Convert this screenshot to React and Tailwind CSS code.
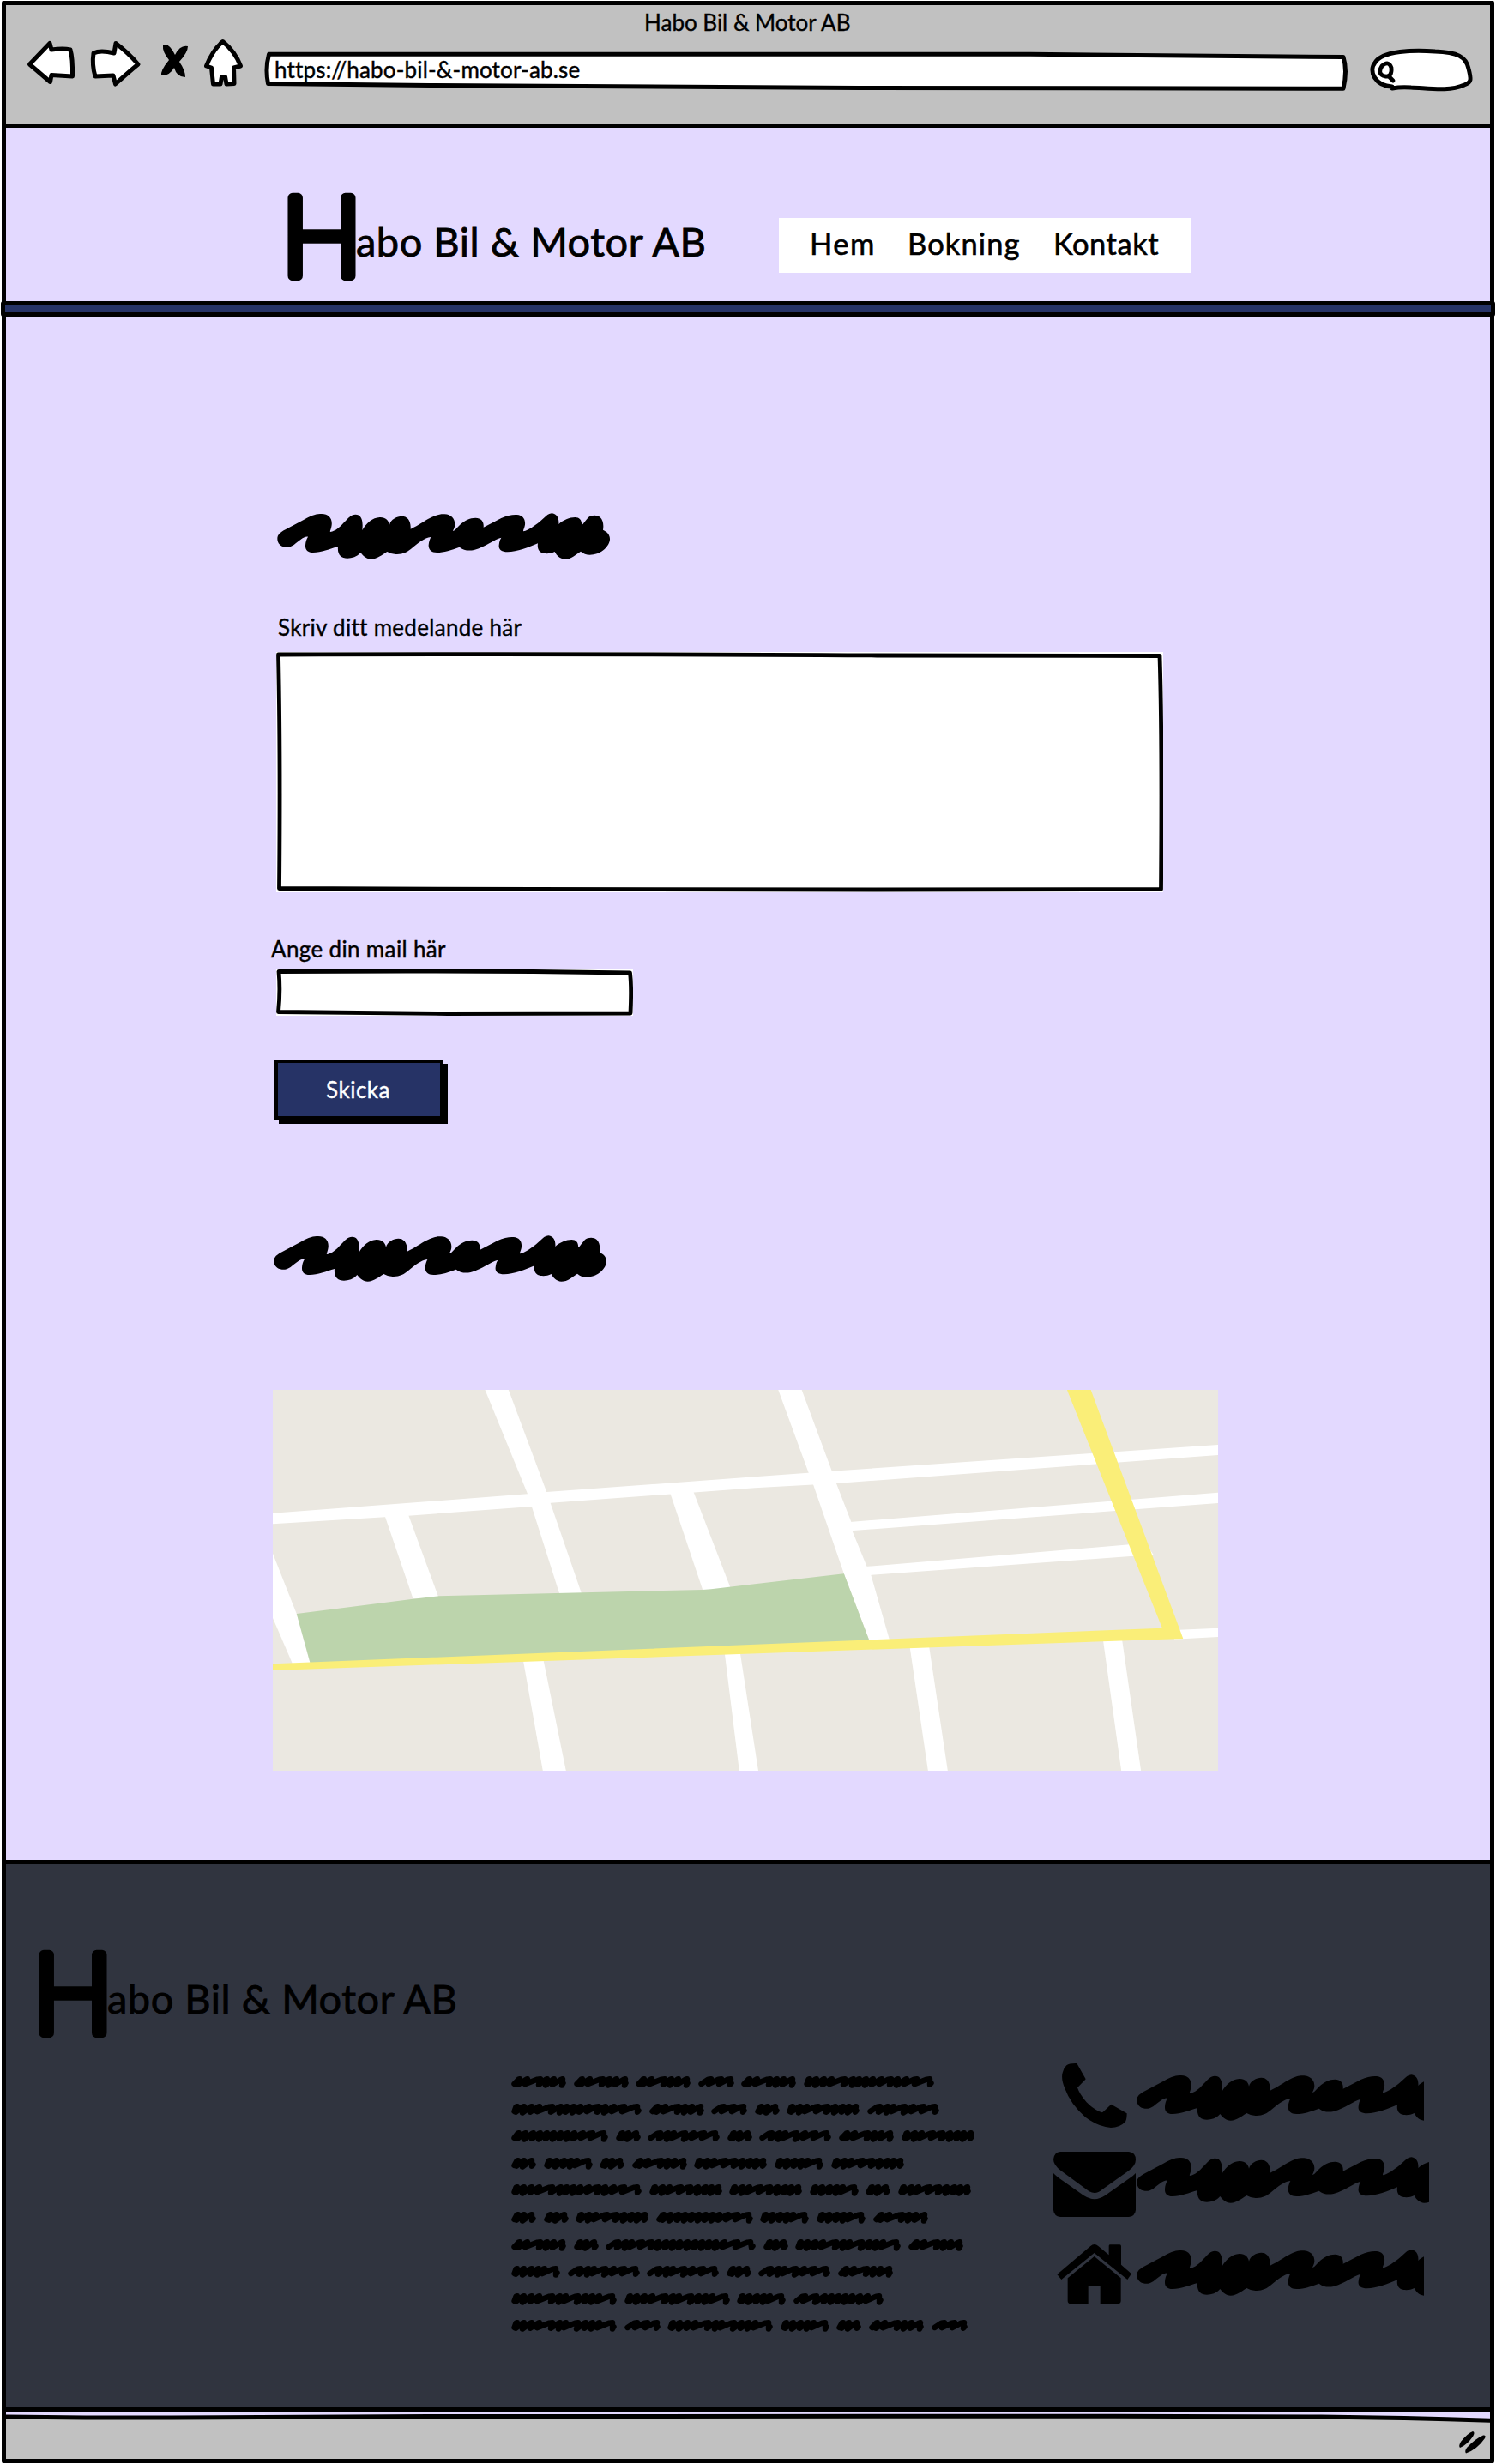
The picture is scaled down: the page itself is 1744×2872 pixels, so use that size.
const FONT = "font-['Lato','Open_Sans',sans-serif] [font-variant-ligatures:none]";

const SCRIBBLE =
  "M57 1410C57 1395 68 1387 85 1378L150 1343C180 1326 195 1323 212 1323C238 1323 252 1342 246 1368C244 1378 240 1384 242 1386C262 1382 275 1370 290 1353C305 1337 315 1325 330 1325C350 1325 358 1343 354 1380C368 1356 390 1336 415 1335C435 1334 446 1345 449 1361C454 1342 475 1331 492 1331C512 1331 525 1347 523 1376C550 1364 570 1348 590 1338C612 1327 625 1323 642 1324C668 1325 682 1345 677 1368C675 1376 670 1382 672 1383C680 1380 685 1372 695 1362C710 1347 730 1337 750 1337C770 1337 780 1350 778 1370L840 1338C860 1328 880 1325 895 1326C917 1327 927 1345 922 1366C920 1376 915 1382 918 1384C935 1380 955 1366 975 1350L995 1332C1005 1323 1012 1321 1018 1321C1035 1323 1043 1340 1041 1359C1055 1345 1080 1335 1098 1335C1115 1335 1123 1347 1121 1363C1128 1358 1135 1345 1145 1335C1155 1327 1175 1325 1186 1335C1196 1345 1199 1360 1196 1379C1212 1386 1221 1397 1220 1413C1217 1440 1185 1466 1150 1466C1138 1466 1127 1462 1118 1454C1100 1466 1085 1481 1062 1481C1045 1480 1035 1470 1027 1455C1015 1462 1000 1462 990 1461C972 1458 965 1445 968 1426C935 1440 895 1456 862 1456C840 1456 830 1447 832 1432C833 1420 836 1412 840 1406C815 1412 785 1438 745 1449C725 1453 708 1450 694 1439C665 1450 640 1458 615 1458C595 1458 585 1446 586 1432C587 1420 590 1412 594 1404C570 1407 550 1425 530 1441C512 1457 495 1465 472 1464C458 1463 450 1460 441 1455C425 1465 405 1481 385 1481C368 1481 358 1470 348 1458C335 1473 318 1478 302 1478C280 1478 266 1465 269 1437C240 1445 210 1458 182 1458C162 1458 154 1447 155 1432C156 1420 159 1410 164 1403C150 1400 130 1420 115 1431C103 1439 93 1440 85 1439C68 1438 57 1425 57 1410Z";

function Scribble({ className = "" }) {
  return (
    <div className={`h-[54px] overflow-hidden ${className}`}>
      <svg width="389" height="54" viewBox="56 1320 1167 162" className="block max-w-none">
        <path d={SCRIBBLE} />
      </svg>
    </div>
  );
}

// Each scribbled word: total width and the x positions of its peaks.
const WORDS = {
  A: [64, [10, 19, 34, 42, 50, 60]],
  B: [42, [15, 27, 38]],
  C: [152, [7, 15, 24, 33, 48, 58, 65, 73, 81, 91, 102, 110, 120, 132, 147]],
  D: [29, [8, 15, 24]],
  E: [85, [7, 16, 24, 37, 48, 57, 66, 73, 81]],
  F: [84, [15, 24, 31, 44, 54, 66, 79]],
  G: [113, [9, 17, 26, 34, 42, 50, 58, 66, 74, 84, 95, 108]],
  H: [57, [7, 15, 24, 32, 39, 52]],
  I: [175, [15, 24, 31, 43, 54, 62, 71, 79, 87, 96, 105, 113, 121, 129, 139, 154, 169]],
  J: [123, [7, 15, 24, 33, 48, 57, 64, 78, 87, 95, 103, 118]],
  K: [105, [14, 27, 37, 45, 53, 61, 69, 78, 87, 100]],
};

const LINES = ["AAABAC", "CABDEF", "GDFDFAE", "DHDAEHE", "CEEHDE", "DDEGHHA", "ADIDJA", "HFFDFA", "JJHK", "JBJHDAB"];

function Word({ kind }) {
  const [width, peaks] = WORDS[kind];
  let d = "M3.5 10";
  peaks.forEach((p, i) => {
    const prev = peaks[i - 1] ?? 0;
    const next = peaks[i + 1] ?? width + 3;
    const wide = next - p > 10;
    const bottom = wide ? 10.2 : i % 2 ? 11.6 : 10.8;
    const dip = i === peaks.length - 1 ? width - 5 : p - (wide ? 3 : 2);
    d += `L${p - (p - prev > 10 ? 3.5 : 1.5)} 4.6L${p} 4.2L${dip} ${bottom}`;
  });
  d += `L${width - 3.5} 9`;
  return (
    <svg width={width} height="16" viewBox={`0 0 ${width} 16`} className="block">
      <path d={d} fill="none" stroke="#000" strokeWidth="6.4" strokeLinejoin="round" strokeLinecap="round" />
    </svg>
  );
}

function Logo() {
  return (
    <div className="flex h-[104px] w-[500px] items-start whitespace-nowrap">
      <svg width="82" height="104" viewBox="0 0 82 104" className="block shrink-0 overflow-visible">
        <text
          x="40"
          y="97.5"
          textAnchor="middle"
          textLength="94"
          lengthAdjust="spacingAndGlyphs"
          className="text-[129px] font-light"
          stroke="#000"
          strokeWidth="11.5"
          strokeLinejoin="round"
        >
          H
        </text>
      </svg>
      <span className="-ml-[2px] mt-[34px] text-[47px] leading-none tracking-[0.5px] [-webkit-text-stroke:0.8px_#000]">abo Bil &amp; Motor AB</span>
    </div>
  );
}

function Toolbar() {
  const line = { fill: "#fff", stroke: "#000", strokeWidth: 5, strokeLinejoin: "round", strokeLinecap: "round" };
  return (
    <div className="h-[143px] border-b-[5px] border-black bg-[#c1c1c1] pt-[7px]">
      <div className="ml-[744px] h-[36px] whitespace-nowrap text-[26px] leading-none [-webkit-text-stroke:0.4px_#000]">Habo Bil &amp; Motor AB</div>
      <div className="-mt-[6px] flex h-[66px] items-start">
        <svg className="ml-[23px] block shrink-0" width="268" height="66" viewBox="30 43 268 66">
          <g {...line}>
            <path d="M34.5 75L58 50.5L60 58Q74 56 82 58Q85 68 84.5 89L60 87.5L58.5 95.5Z" />
            <path d="M109 62Q117 58 133 62L135 50.5Q150 62 161 75Q150 84 134.500 98L132 88L111 89Q107 76 109 62Z" />
            <path d="M259.700 48.500Q248 58 240.500 77L246.500 79L248.500 98H257L258.500 89.500H262.500L264 98L273 97.500L272.500 79L280.500 77Q274 60 259.700 48.500Z" />
          </g>
          <path d="M190 53Q197 49 204 64Q210 52 219 54Q219 61 209 72Q216 82 216 90Q206 90 203 79Q197 89 188 88Q187 82 197 70Q189 60 190 53Z" />
        </svg>
        <div className="relative ml-[10px] h-[45px] w-[1262px] shrink-0 pt-[25px]">
          <svg className="absolute left-0 top-[16px]" width="1264" height="48" viewBox="307 59 1264 48">
            <path {...line} d="M312.500 63.300H1200L1565 66.500Q1570 82 1565 103.200L1000 102.500L500 99.500L311.500 97.500Q308 80 312.500 63.300Z" />
          </svg>
          <span className="relative ml-[12px] block whitespace-nowrap text-[26px] leading-none tracking-[0.17px] [-webkit-text-stroke:0.4px_#000]">
            https://habo-bil-&amp;-motor-ab.se
          </span>
        </div>
        <svg className="ml-[26px] mt-[12px] block shrink-0" width="124" height="54" viewBox="1597 55 124 54">
          <path {...line} d="M1624 101C1604 100 1596 83 1604 73C1612 59 1650 58 1674 60C1700 61 1710 66 1713 80C1716 92 1717 96 1708 99C1690 107 1668 103 1646 102Q1634 101 1624 103Z" />
          <path d="M1612 77Q1620 70 1623 79Q1624 90 1616 89Q1606 87 1612 77M1620 89L1625 94" fill="none" stroke="#000" strokeWidth="4.800" strokeLinecap="round" />
        </svg>
      </div>
    </div>
  );
}

function StreetMap() {
  return (
    <svg className="ml-[311px] mt-[126px] block" width="1102" height="444" viewBox="49 60 2979 1332" preserveAspectRatio="none">
      <rect x="49" y="60" width="2979" height="1332" fill="#ebe8e1" />
      <g fill="#fff">
        <path d="M718 60H792L912 417L1023 775H953L865 468L852 424Z" />
        <path d="M49 491L852 424L912 417L1568 364L1811 344L3028 252V288L1825 387L1568 403L925 455L865 468L476 500L402 505L49 529Z" />
        <path d="M402 500L476 496L573 790H491Z" />
        <path d="M1301 420L1374 414L1494 760H1404Z" />
        <path d="M49 632L124 843L168 1020L112 1020L49 858Z" />
        <path d="M1642 60H1716L1811 344L1825 387L1872 522L1875 553L1921 677L1934 707L1994 940H1930L1849 703L1751 387L1737 348Z" />
        <path d="M1868 522L3028 419V456L1870 553Z" />
        <path d="M1916 678L2749 601L2800 598L2824 636L2761 641L1930 708Z" />
        <path d="M2890 900L3028 893V924L2890 932Z" />
        <path d="M838 1005H902L973 1392H900Z" />
        <path d="M1473 980H1522L1579 1392H1519Z" />
        <path d="M2056 955H2117L2176 1392H2114Z" />
        <path d="M2665 930H2725L2785 1392H2723Z" />
      </g>
      <path d="M124 843L491 791L573 781L1404 759L1430 757L1568 739L1849 703L1930 940L168 1020Z" fill="#bcd4ac" />
      <path d="M49 1018L2852 893L2552 60H2627L2918 930L49 1041Z" fill="#faee78" />
    </svg>
  );
}

function ContactRow({ className, icon, scribble }) {
  return (
    <div className={`flex items-start ${className}`}>
      <div className="h-full w-[97px] shrink-0">{icon}</div>
      {scribble}
    </div>
  );
}

const phoneIcon = (
  <svg width="97" height="78" viewBox="84 74 291 234">
    <path d="M130 84Q140 76 166 77L197 132Q190 140 168 162Q175 184 200 213Q227 240 255 249Q262 243 286 220L341 252Q341 272 336 281Q316 302 285 302Q240 298 196 265Q145 222 124 165Q110 130 116 110Q120 93 130 84Z" />
  </svg>
);
const mailIcon = (
  <svg width="97" height="76" viewBox="84 384 291 228">
    <path d="M108 384H348Q372 387 372 412Q372 432 348 450L255 516Q228 540 200 516L110 450Q84 430 84 410Q87 386 108 384Z" />
    <path d="M84 459Q92 468 110 481L190 537Q228 562 265 537L350 477Q365 467 372 459V588Q370 609 348 612H108Q86 609 84 588Z" />
  </svg>
);
const homeIcon = (
  <svg width="97" height="70" viewBox="84 708 291 210">
    <path d="M97 813L213 715Q227 702 241 714L278 745V713Q278 709 283 709H316Q321 709 321 714V779L357 811L343 831L227 738L112 831Z" />
    <path d="M227 750L320 826V905Q320 915 310 915H248V853H206V915H144Q134 915 134 905V826Z" />
  </svg>
);

export default function App() {
  return (
    <div className={`h-[2872px] w-[1744px] bg-white pl-[2px] pt-px text-black ${FONT}`}>
      <div className="flex h-[2870px] w-[1740px] flex-col rounded-[2px] border-[5px] border-black bg-[#e3d9ff]">
        <Toolbar />

        <header className="flex h-[202px] shrink-0 items-start">
          <div className="ml-[328px] mt-[75px] w-[573px] shrink-0"><Logo /></div>
          <nav className="mt-[105px] flex h-[64px] w-[480px] shrink-0 items-start whitespace-nowrap bg-white pt-[13px] text-[34.5px] leading-none [-webkit-text-stroke:0.6px_#000]">
            <a className="ml-[36px] w-[114px] tracking-[1.5px]">Hem</a>
            <a className="w-[170px] tracking-[1.1px]">Bokning</a>
            <a className="tracking-[0.5px]">Kontakt</a>
          </nav>
        </header>
        <div className="-mx-[6px] h-[18px] shrink-0 rounded-[3px] border-[5px] border-black bg-[#263366]" />

        <main className="h-[1799px] shrink-0">
          <Scribble className="ml-[316px] mt-[229px]" />
          <div className="ml-[317px] mt-[66px] h-[42px] whitespace-nowrap text-[26px] leading-none tracking-[0.3px] [-webkit-text-stroke:0.4px_#000]">Skriv ditt medelande här</div>
          <div className="relative ml-[315px] h-[280px] w-[1034px] bg-white">
            <svg className="absolute inset-0" width="1034" height="280" viewBox="0 0 1034 280" fill="none">
              <path d="M2.500 3Q400 2 700 4L1030 4.500Q1033 100 1031.500 276.500L700 277L300 276.500L3.500 275.500Q5 120 2.500 3Z" stroke="#000" strokeWidth="4.800" strokeLinejoin="round" />
            </svg>
          </div>
          <div className="ml-[309px] mt-[53px] h-[37px] whitespace-nowrap text-[26px] leading-none tracking-[0.35px] [-webkit-text-stroke:0.4px_#000]">Ange din mail här</div>
          <div className="relative ml-[315px] h-[54px] w-[416px] bg-white">
            <svg className="absolute inset-0" width="416" height="54" viewBox="0 0 416 54" fill="none">
              <path d="M3 2.500Q150 1.500 300 2.500L412.500 4Q414.500 20 413 51L200 51.500L2.500 49.500Q5 25 3 2.500Z" stroke="#000" strokeWidth="4.800" strokeLinejoin="round" />
            </svg>
          </div>
          <button className="ml-[313px] mt-[51px] block h-[70px] w-[197px] border-[4.5px] border-black bg-[#263366] pr-[2px] text-center text-[26px] leading-none tracking-[0.5px] text-white shadow-[5px_5px_0_#000] [-webkit-text-stroke:0.4px_#fff]">
            Skicka
          </button>
          <Scribble className="ml-[312px] mt-[135px]" />
          <StreetMap />
        </main>

        <footer className="flex h-[643px] shrink-0 items-start border-y-[5px] border-black bg-[#30343f]">
          <div className="ml-[38px] mt-[99px] w-[551px] shrink-0"><Logo /></div>
          <div className="mt-[246px] w-[632px] shrink-0">
            {LINES.map((line, i) => (
              <div key={i} className="flex h-[31.6px] gap-[8.6px]">
                {line.split("").map((k, j) => <Word key={j} kind={k} />)}
              </div>
            ))}
          </div>
          <div className="mt-[231px] w-[450px] shrink-0">
            <ContactRow className="h-[104px]" icon={phoneIcon} scribble={<Scribble className="mt-[14px] w-[335px]" />} />
            <ContactRow className="h-[108px]" icon={mailIcon} scribble={<Scribble className="mt-[6px] w-[341px]" />} />
            <ContactRow className="h-[80px]" icon={homeIcon} scribble={<Scribble className="mt-[6px] w-[335px]" />} />
          </div>
        </footer>

        <div className="relative flex min-h-0 flex-1 items-end justify-end bg-[#c1c1c1]">
          <svg className="absolute left-0 top-0" width="1730" height="14" viewBox="7 2811 1730 14">
            <path d="M0 2811H1740V2821Q1640 2817 1540 2817L1300 2816.200H500L200 2818L100 2818L0 2816.800Z" fill="#e3d9ff" />
            <path d="M0 2816.800L100 2818L200 2818L500 2816.500L1300 2816.200L1540 2817Q1640 2818 1745 2821.500" fill="none" stroke="#000" strokeWidth="5" />
          </svg>
          <svg className="mb-[5px] mr-[4px]" width="33" height="28" viewBox="1700 2833 33 28">
            <path d="M1717 2834Q1720 2835 1717 2840Q1710 2850 1702 2853Q1700 2851 1703 2846Q1711 2836 1717 2834ZM1729 2838.500Q1733 2838 1731 2842Q1722 2855 1709 2859.500Q1707 2857 1710 2853Q1719 2843 1729 2838.500Z" />
          </svg>
        </div>
      </div>
    </div>
  );
}
